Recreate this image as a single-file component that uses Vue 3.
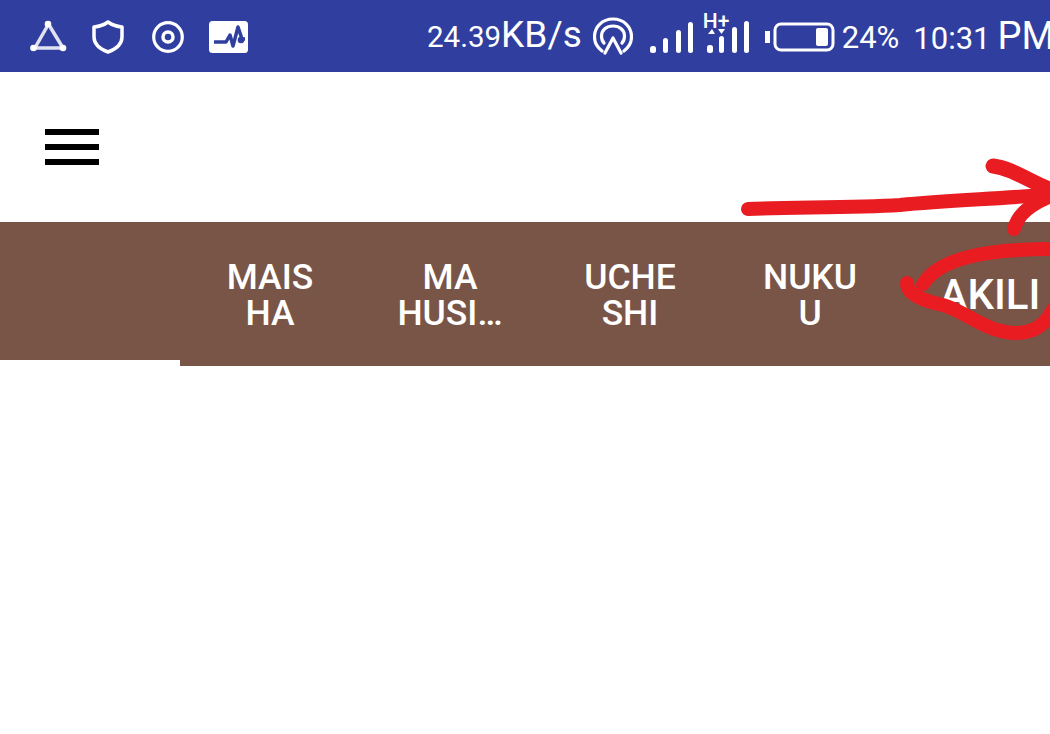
<script setup>
const tabs = [
  { id: 1, lines: ['MAIS', 'HA'] },
  { id: 2, lines: ['MA', 'HUSI…'] },
  { id: 3, lines: ['UCHE', 'SHI'] },
  { id: 4, lines: ['NUKU', 'U'] },
  { id: 5, lines: ['AKILI'], active: true }
]
</script>

<template>
  <div class="page">
    <header class="status">
      <div class="left-icons">
        <svg class="ic tri" viewBox="0 0 38 34" width="38" height="34">
          <g fill="none" stroke="#fff" stroke-width="3.500" stroke-linecap="round">
            <path d="M18 5 L6 26" opacity=".85" />
            <path d="M19 5 L33 28" opacity=".85" />
            <path d="M4 28 H33" opacity=".85" />
          </g>
          <circle cx="18" cy="4" r="3.300" fill="#fff" />
          <circle cx="3.500" cy="28" r="3.300" fill="#fff" />
          <circle cx="33" cy="28" r="3.300" fill="#fff" />
        </svg>
        <svg class="ic shield" viewBox="0 0 32 34" width="32" height="34">
          <path d="M16 2 C20 5 25 6.500 30 7 V17 C30 24 24 29 16 32 C8 29 2 24 2 17 V7 C7 6.500 12 5 16 2 Z" fill="none" stroke="#fff" stroke-width="3.500" stroke-linejoin="round" />
        </svg>
        <svg class="ic disc" viewBox="0 0 32 32" width="32" height="32">
          <circle cx="16" cy="16" r="14.300" fill="none" stroke="#fff" stroke-width="3.200" />
          <circle cx="16" cy="16" r="5" fill="none" stroke="#fff" stroke-width="3.500" />
        </svg>
        <svg class="ic pulse" viewBox="0 0 40 32" width="40" height="32">
          <rect width="39" height="32" rx="3.500" fill="#fff" />
          <path d="M5 21 H13 L17 21 L21 14 L24 25 L29 6 L33 18 H36" fill="none" stroke="#303f9f" stroke-width="3.500" stroke-linejoin="round" />
          <circle cx="32" cy="19" r="3.300" fill="#303f9f" />
        </svg>
      </div>
      <div class="right-info">
        <span class="speed"><span class="sm">24.39</span>KB/s</span>
        <svg class="hotspot" viewBox="0 0 40 38" width="40" height="38">
          <g fill="none" stroke="#fff" stroke-width="3.200" stroke-linecap="round">
            <path d="M9 34 C4 30 1.500 25 1.500 20 C1.500 9.500 9.500 2 20 2 C30.500 2 38.500 9.500 38.500 20 C38.500 25 36 30 31 34" />
            <path d="M11 26 C9 24 8.500 21.500 8.500 19 C8.500 13 13.500 9 20 9 C26.500 9 31.500 13 31.500 19 C31.500 21.500 31 24 29 26" />
            <path d="M12 36 L20 21 L28 36" stroke-linejoin="round" />
          </g>
        </svg>
        <svg class="signal" viewBox="0 0 44 34" width="44" height="34">
          <g fill="#fff">
            <rect x="0" y="26" width="6" height="7" rx="2.500" />
            <rect x="13" y="18" width="5" height="15" rx="2.500" />
            <rect x="26" y="10" width="5" height="23" rx="2.500" />
            <rect x="38" y="2" width="5" height="31" rx="2.500" />
          </g>
        </svg>
        <div class="signal-h">
          <span class="hplus">H+</span>
          <svg viewBox="0 0 44 34" width="44" height="34">
            <g fill="#fff">
              <path d="M2 14 L6 9 L9 14 Z" />
              <path d="M12 9 H19 L15.500 14 Z" />
              <rect x="1" y="25" width="6" height="8" rx="2.500" />
              <rect x="13" y="16" width="5" height="17" rx="2.500" />
              <rect x="26" y="7" width="5" height="26" rx="2.500" />
              <rect x="38" y="1" width="5" height="32" rx="2.500" />
            </g>
          </svg>
        </div>
        <svg class="battery" viewBox="0 0 70 30" width="70" height="30">
          <rect x="0" y="9" width="5" height="12" fill="#fff" />
          <rect x="10" y="2" width="58" height="26" rx="6" fill="none" stroke="#fff" stroke-width="3" />
          <rect x="51" y="6" width="12" height="18" rx="2" fill="#fff" />
        </svg>
        <span class="pct">24%</span>
        <span class="time"><span class="t">10:31</span><span class="pm">PM</span></span>
      </div>
    </header>

    <div class="toolbar">
      <div class="hamburger"><i></i><i></i><i></i></div>
    </div>

    <nav class="tabs">
      <div class="lead"></div>
      <div v-for="tab in tabs" :key="tab.id" class="tab" :class="{ active: tab.active }">
        <span v-for="line in tab.lines" :key="line">{{ line }}</span>
      </div>
    </nav>

    <svg class="ink" viewBox="0 0 1050 734" width="1050" height="734">
      <g fill="none" stroke="#e91c21" stroke-linecap="round" stroke-linejoin="round">
        <path stroke-width="14" d="M748 209 C790 207 850 208 900 205 C950 200 1000 199 1056 194" />
        <path stroke-width="15" d="M993 166 C1012 168 1030 182 1056 192" />
        <path stroke-width="14" d="M1014 229 C1018 214 1030 204 1056 194" />
        <path stroke-width="14" d="M923 284 C940 258 985 249 1056 249" />
        <path stroke-width="14" d="M907 283 C907 295 925 301 943 305 C965 311 985 332 1015 333 C1035 333 1045 325 1056 305" />
      </g>
    </svg>
  </div>
</template>

<style scoped>
.page {
  position: relative;
  width: 1050px;
  height: 734px;
  overflow: hidden;
  background: #fff;
  font-family: Roboto, "Liberation Sans", sans-serif;
}
.status {
  height: 72px;
  background: #303f9f;
  color: #fff;
  display: flex;
  align-items: center;
  padding-left: 30px;
  overflow: hidden;
}
.left-icons {
  display: flex;
  align-items: center;
  flex: none;
  margin-top: 1px;
}
.tri { margin-right: 24px; }
.shield { margin-right: 28px; }
.disc { margin-right: 25px; }
.right-info {
  display: flex;
  align-items: center;
  flex: none;
  margin-left: 178px;
  white-space: nowrap;
}
.speed {
  font-size: 37px;
  margin-right: 11px;
  line-height: 44px;
}
.sm { font-size: 29.500px; }
.hotspot { margin-right: 17px; }
.signal { margin-right: 12px; margin-top: 1px; }
.signal-h { position: relative; margin-right: 15px; margin-top: 1px; display: flex; }
.hplus {
  position: absolute;
  left: -3px;
  top: -9px;
  font-size: 21px;
  font-weight: 500;
  line-height: 20px;
}
.battery { margin-right: 7px; margin-top: 2px; }
.pct { font-size: 31px; margin-right: 14px; margin-top: 3px; }
.time { font-size: 35px; display: flex; align-items: baseline; gap: 7px; }
.t { font-size: 31px; }
.pm { font-size: 38px; }
.toolbar {
  height: 150px;
  padding: 57px 0 0 45px;
  box-sizing: border-box;
}
.hamburger {
  width: 54px;
  display: flex;
  flex-direction: column;
  gap: 9px;
}
.hamburger i {
  display: block;
  height: 6px;
  background: #000;
}
.tabs {
  display: flex;
  align-items: flex-start;
  height: 144px;
}
.lead {
  flex: none;
  width: 180px;
  height: 138px;
  background: #795548;
}
.tab {
  flex: none;
  width: 180px;
  height: 144px;
  background: #795548;
  color: #fff;
  font-size: 35.500px;
  font-weight: 500;
  line-height: 36px;
  display: flex;
  flex-direction: column;
  align-items: center;
  justify-content: center;
  padding-top: 2px;
  box-sizing: border-box;
}
.tab.active {
  font-size: 42px;
}
.ink {
  position: absolute;
  left: 0;
  top: 0;
  pointer-events: none;
}
</style>
